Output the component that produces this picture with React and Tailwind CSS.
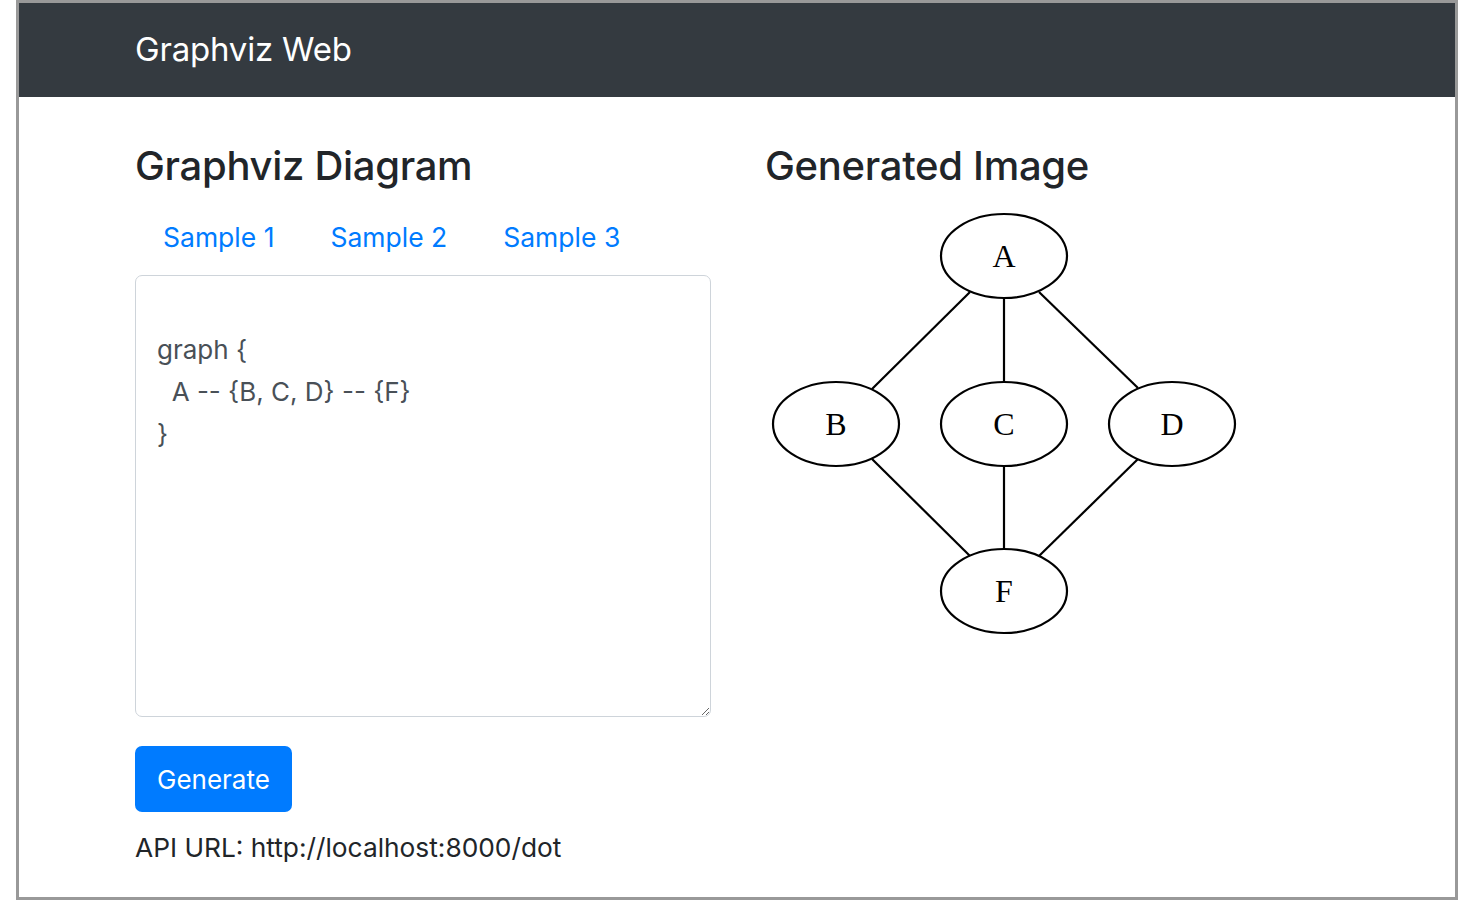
import React, { useState } from 'react';

const SAMPLE = `
graph {
  A -- {B, C, D} -- {F}
}`;

const nodes = [
  { id: 'A', x: 239, y: 51 },
  { id: 'B', x: 71, y: 219 },
  { id: 'C', x: 239, y: 219 },
  { id: 'D', x: 407, y: 219 },
  { id: 'F', x: 239, y: 386 },
];

const edges = [
  [205, 87, 107, 184],
  [239, 93, 239, 177],
  [274, 87, 373, 183],
  [107, 254, 205, 351],
  [239, 261, 239, 344],
  [373, 254, 274, 351],
];

const Graph = () => (
  <svg width="480" height="438" viewBox="0 0 480 438">
    {edges.map((e, i) => (
      <line key={i} x1={e[0]} y1={e[1]} x2={e[2]} y2={e[3]} stroke="#000" strokeWidth="2.2" />
    ))}
    {nodes.map((n) => (
      <g key={n.id}>
        <ellipse cx={n.x} cy={n.y} rx="63" ry="42" fill="none" stroke="#000" strokeWidth="2.2" />
        <text
          x={n.x}
          y={n.y + 11}
          textAnchor="middle"
          fontSize="32"
          fontFamily="'Liberation Serif', 'Times New Roman', serif"
          fill="#000"
        >
          {n.id}
        </text>
      </g>
    ))}
  </svg>
);

export default function App() {
  const [code, setCode] = useState(SAMPLE);

  return (
    <div className="min-h-screen bg-white font-['Inter',sans-serif]">
      <div className="ml-4 w-[1442px] h-[900px] border-[3px] border-[#999999] flex flex-col">
        {/* navbar */}
        <div className="h-[94px] bg-[#343a40] flex items-center pl-[116px]">
          <span className="text-white text-[33px] tracking-[-0.2px]">Graphviz Web</span>
        </div>

        <div className="flex pl-[116px] pt-[44px] gap-[54px]">
          {/* left column */}
          <div className="w-[576px] flex flex-col">
            <h2 className="text-[40px] leading-[50px] font-medium text-[#212529] tracking-[-0.3px] mb-[14px]">
              Graphviz Diagram
            </h2>
            <div className="flex h-[70px] items-center pb-[4px]">
              {['Sample 1', 'Sample 2', 'Sample 3'].map((s) => (
                <a key={s} className="px-[28px] text-[26.5px] text-[#007bff] cursor-pointer" onClick={() => setCode(SAMPLE)}>
                  {s}
                </a>
              ))}
            </div>
            <textarea
              value={code}
              onChange={(e) => setCode(e.target.value)}
              className="w-[576px] h-[442px] border border-[#ced4da] rounded-[7px] px-[21px] py-[11px] text-[26px] leading-[42px] text-[#495057] outline-none resize-y"
            />
            <button className="mt-[29px] self-start h-[66px] px-[22px] bg-[#007bff] text-white text-[26px] rounded-[7px]">
              Generate
            </button>
            <p className="mt-[15px] text-[26.3px] leading-[42px] text-[#212529]">API URL: http://localhost:8000/dot</p>
          </div>

          {/* right column */}
          <div className="w-[576px] flex flex-col">
            <h2 className="text-[40px] leading-[50px] font-medium text-[#212529] tracking-[-0.3px] mb-[14px]">
              Generated Image
            </h2>
            <Graph />
          </div>
        </div>
      </div>
    </div>
  );
}
